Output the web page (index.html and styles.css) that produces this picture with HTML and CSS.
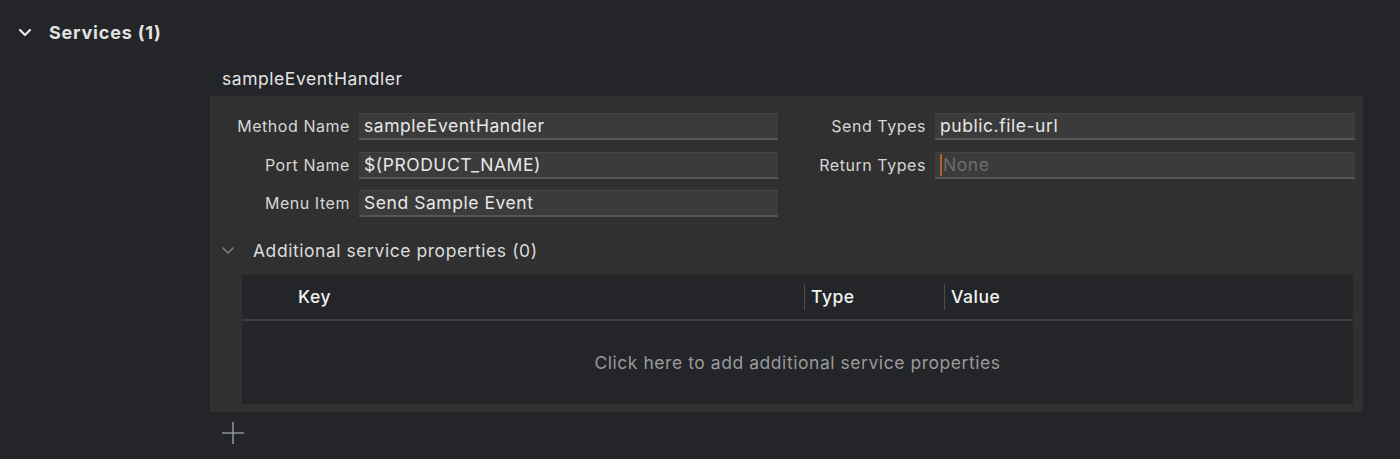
FILE: index.html
```html
<!DOCTYPE html>
<html>
<head>
<meta charset="utf-8">
<link rel="stylesheet" href="styles.css">
</head>
<body>
<div class="page">
  <div class="section-header">
    <svg class="chev" width="14" height="9" viewBox="0 0 14 9"><path d="M2 2 L7 7 L12 2" fill="none" stroke="#e8e8e8" stroke-width="2.2" stroke-linecap="round" stroke-linejoin="round"/></svg>
    <span class="section-title">Services (1)</span>
  </div>
  <div class="service-name">sampleEventHandler</div>
  <div class="panel">
    <div class="form">
      <div class="label">Method Name</div>
      <div class="field">sampleEventHandler</div>
      <div class="label">Send Types</div>
      <div class="field">public.file-url</div>
      <div class="label">Port Name</div>
      <div class="field">$(PRODUCT_NAME)</div>
      <div class="label">Return Types</div>
      <div class="field"><span class="cursor"></span><span class="placeholder">None</span></div>
      <div class="label">Menu Item</div>
      <div class="field">Send Sample Event</div>
    </div>
    <div class="sub-header">
      <svg class="chev-small" width="14" height="9" viewBox="0 0 14 9"><path d="M2 2 L7 7 L12 2" fill="none" stroke="#7a7a7a" stroke-width="1.6" stroke-linecap="round" stroke-linejoin="round"/></svg>
      <span class="sub-title">Additional service properties (0)</span>
    </div>
    <div class="table">
      <div class="thead">
        <div class="th th-key">Key</div>
        <div class="th th-type">Type</div>
        <div class="th th-value">Value</div>
      </div>
      <div class="tbody">Click here to add additional service properties</div>
    </div>
  </div>
  <div class="add-row">
    <svg width="24" height="24" viewBox="0 0 24 24"><path d="M12 1 V23 M1 12 H23" stroke="#8c8f93" stroke-width="1.6" fill="none"/></svg>
  </div>
</div>
</body>
</html>
```

FILE: styles.css
```css
html, body {
  margin: 0;
  padding: 0;
  background: #232528;
}
body {
  width: 1400px;
  height: 459px;
  overflow: hidden;
  font-family: Inter, "Liberation Sans", sans-serif;
  color: #e4e4e4;
  letter-spacing: 0.55px;
}
.page {
  display: flex;
  flex-direction: column;
}
.section-header {
  display: flex;
  align-items: center;
  height: 32px;
  margin-top: 16px;
  padding-left: 18px;
}
.chev {
  margin-right: 17px;
}
.section-title {
  font-size: 18px;
  font-weight: 700;
  letter-spacing: 0.8px;
  color: #e2e2e2;
}
.service-name {
  margin-left: 222px;
  margin-top: 15px;
  height: 33px;
  line-height: 32px;
  font-size: 17.5px;
  color: #e4e4e4;
}
.panel {
  margin-left: 210px;
  width: 1153px;
  height: 316px;
  background: #303030;
  display: flex;
  flex-direction: column;
}
.form {
  display: grid;
  grid-template-columns: 140px 419px 139px 420px;
  grid-auto-rows: 27px;
  column-gap: 9px;
  row-gap: 11.5px;
  padding-top: 17px;
}
.label {
  text-align: right;
  font-size: 16px;
  color: #d6d6d6;
  line-height: 27px;
  white-space: nowrap;
}
.field {
  box-sizing: border-box;
  background: #3b3b3b;
  border-top: 1px solid #454545;
  border-bottom: 2px solid #555;
  padding-left: 5px;
  font-size: 17.5px;
  line-height: 24px;
  color: #e8e8e8;
  display: flex;
  align-items: center;
  white-space: nowrap;
}
.cursor {
  display: inline-block;
  width: 2px;
  height: 22px;
  background: #b5652a;
  margin-right: 1px;
}
.placeholder {
  color: #6c6c6c;
}
.sub-header {
  display: flex;
  align-items: center;
  height: 30px;
  margin-top: 18px;
  padding-left: 11px;
}
.chev-small {
  margin-right: 18px;
}
.sub-title {
  font-size: 17.5px;
  color: #dcdcdc;
}
.table {
  margin-top: 10px;
  margin-left: 32px;
  width: 1111px;
  height: 129px;
  background: #232528;
  display: flex;
  flex-direction: column;
}
.thead {
  height: 46px;
  border-bottom: 2px solid #3b3d41;
  box-sizing: border-box;
  display: flex;
  align-items: center;
}
.th {
  font-size: 17.5px;
  font-weight: 500;
  color: #f2f2f2;
  height: 26px;
  line-height: 26px;
  box-sizing: border-box;
  white-space: nowrap;
}
.th-key {
  width: 562px;
  padding-left: 56px;
}
.th-type {
  width: 140px;
  border-left: 1px solid #4a4c50;
  padding-left: 6px;
}
.th-value {
  border-left: 1px solid #4a4c50;
  padding-left: 6px;
}
.tbody {
  flex: 1;
  display: flex;
  align-items: center;
  justify-content: center;
  font-size: 17.5px;
  color: #9a9a9a;
}
.add-row {
  margin-left: 221px;
  margin-top: 9px;
  height: 24px;
}
```
